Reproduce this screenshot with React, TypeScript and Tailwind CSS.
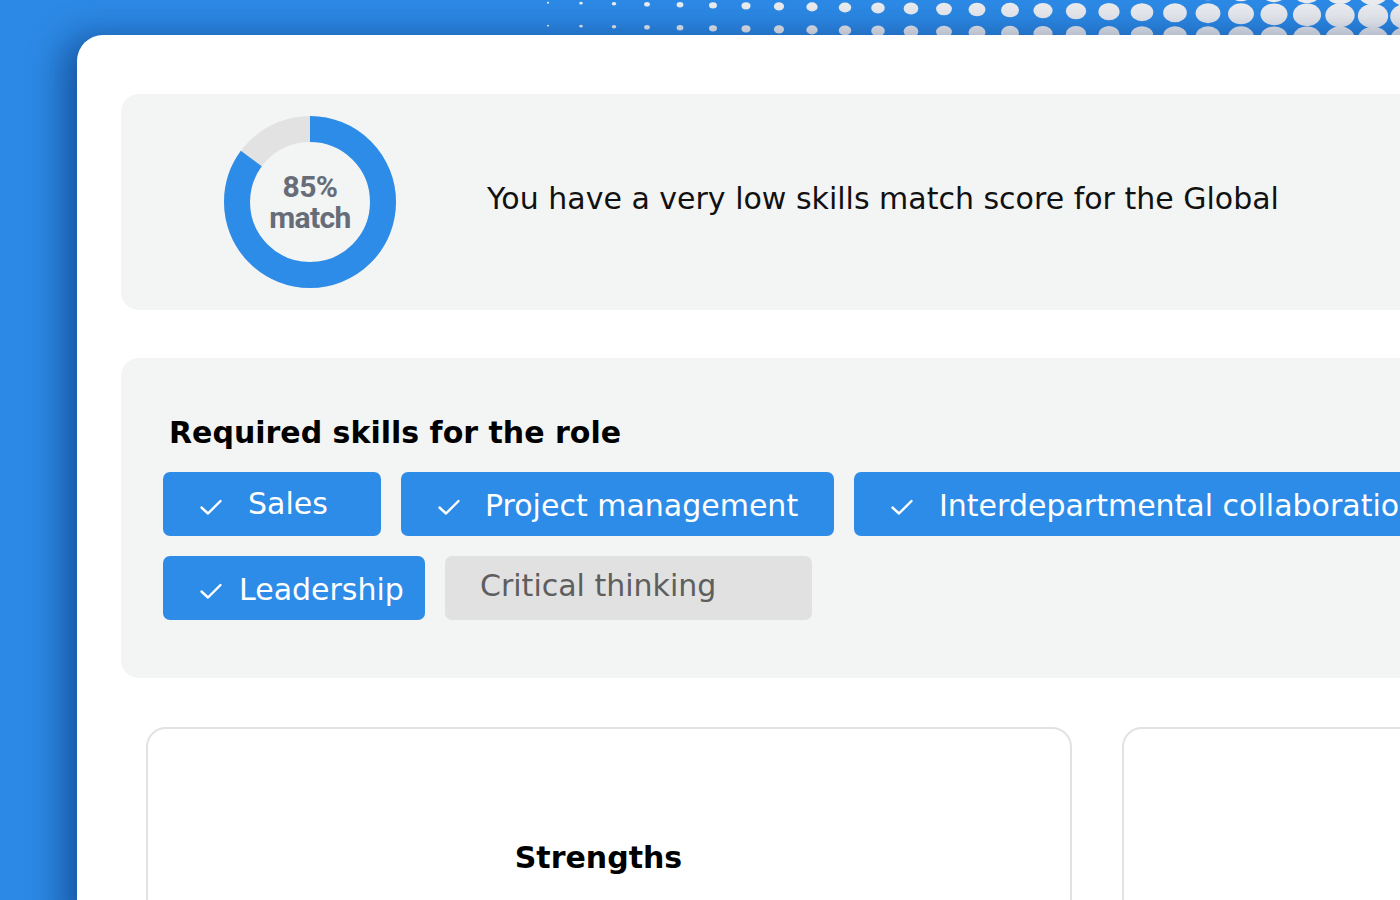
import React from "react";

type Dot = { cx: number; cy: number; rx: number; ry: number };

// Halftone band along the top edge: columns every 33px, dots grow toward the right
function buildDots(): Dot[] {
  const dots: Dot[] = [];
  for (let i = 0; i < 28; i++) {
    const x = 515 + 33 * i;
    const r = Math.max(0, (x - 480) * 0.0152);
    if (r < 0.8) continue;
    const base = 8 + (x - 880) * 0.016;
    for (const row of [-1, 0, 1]) {
      const y = base + row * 23;
      dots.push({ cx: x, cy: y, rx: r * 1.12, ry: r * 0.9 });
    }
  }
  return dots;
}

function HalftoneBand() {
  const dots = buildDots();
  return (
    <svg
      className="absolute left-0 top-0"
      width={1400}
      height={60}
      viewBox="0 0 1400 60"
    >
      {dots.map((d, i) => (
        <ellipse key={i} cx={d.cx} cy={d.cy} rx={d.rx} ry={d.ry} fill="#ebedf0" />
      ))}
    </svg>
  );
}

function MatchDonut() {
  const r = 73;
  const c = 2 * Math.PI * r;
  return (
    <div className="relative w-[176px] h-[176px] shrink-0">
      <svg width={176} height={176} viewBox="0 0 176 176" className="absolute inset-0">
        <circle cx={88} cy={88} r={r} fill="none" stroke="#e2e2e2" strokeWidth={26} />
        <circle
          cx={88}
          cy={88}
          r={r}
          fill="none"
          stroke="#2d8ce8"
          strokeWidth={26}
          strokeDasharray={`${c * 0.85} ${c}`}
          transform="rotate(-90 88 88)"
        />
      </svg>
      <div className="absolute inset-0 flex flex-col items-center justify-center font-['Roboto'] font-bold text-[30px] leading-[31px] tracking-[-0.6px] text-[#676d78]">
        <span>85%</span>
        <span>match</span>
      </div>
    </div>
  );
}

function Check() {
  return (
    <svg width={24} height={18} viewBox="0 0 24 18" className="shrink-0 mt-[6px]">
      <polyline
        points="2.5,9.5 9,15.5 21.5,3"
        fill="none"
        stroke="#ffffff"
        strokeWidth={2.4}
        strokeLinecap="round"
        strokeLinejoin="round"
      />
    </svg>
  );
}

function SkillChip({
  label,
  widthClass,
  gapClass,
  textClass,
}: {
  label: string;
  widthClass: string;
  gapClass: string;
  textClass: string;
}) {
  return (
    <div
      className={`h-[64px] ${widthClass} shrink-0 rounded-[7px] bg-[#2d8ce8] flex items-center pl-[36px] ${gapClass} text-white text-[30px] leading-[36px] whitespace-nowrap overflow-hidden`}
    >
      <Check />
      <span className={textClass}>{label}</span>
    </div>
  );
}

export default function App() {
  return (
    <div className="relative w-[1400px] h-[900px] overflow-hidden bg-[#2c8ae6] font-['DejaVu_Sans',sans-serif]">
      <HalftoneBand />

      <div className="relative ml-[77px] mt-[35px] w-[1400px] h-[900px] bg-white rounded-tl-[26px] shadow-[-14px_2px_36px_rgba(0,25,80,0.48)] pl-[44px] pt-[59px]">
        {/* Score summary */}
        <div className="w-[1400px] h-[216px] rounded-[18px] bg-[#f3f4f4] flex items-center pl-[101px]">
          <MatchDonut />
          <p className="ml-[89px] mb-[6px] text-[30px] leading-[36px] text-[#111111] whitespace-nowrap">
            You have a very low skills match score for the Global
          </p>
        </div>

        {/* Required skills */}
        <div className="mt-[48px] w-[1400px] h-[320px] rounded-[18px] bg-[#f3f4f4] pt-[57px] pl-[42px]">
          <h2 className="ml-[6px] text-[30px] leading-[36px] font-bold text-black">
            Required skills for the role
          </h2>
          <div className="mt-[21px] flex flex-col gap-[20px]">
            <div className="flex gap-[20px]">
              <SkillChip label="Sales" widthClass="w-[218px]" gapClass="gap-[25px]" textClass="" />
              <SkillChip
                label="Project management"
                widthClass="w-[433px]"
                gapClass="gap-[24px]"
                textClass="mt-[3px]"
              />
              <SkillChip
                label="Interdepartmental collaboration"
                widthClass="w-[600px]"
                gapClass="gap-[25px]"
                textClass="mt-[3px]"
              />
            </div>
            <div className="flex gap-[20px]">
              <SkillChip
                label="Leadership"
                widthClass="w-[262px]"
                gapClass="gap-[16px]"
                textClass="mt-[4px]"
              />
              <div className="h-[64px] w-[367px] shrink-0 rounded-[7px] bg-[#e1e1e1] flex items-center pl-[35px] pb-[4px] text-[#5e5e5e] text-[30px] leading-[36px] whitespace-nowrap">
                Critical thinking
              </div>
            </div>
          </div>
        </div>

        {/* Strengths / next card */}
        <div className="mt-[49px] ml-[25px] flex gap-[50px]">
          <div className="w-[926px] h-[300px] shrink-0 rounded-[20px] border-2 border-[#e2e2e2] bg-white pt-[111px] pr-[21px] text-center">
            <h3 className="text-[30px] leading-[36px] font-bold text-black">Strengths</h3>
          </div>
          <div className="w-[600px] h-[300px] shrink-0 rounded-[20px] border-2 border-[#e2e2e2] bg-white" />
        </div>
      </div>
    </div>
  );
}
